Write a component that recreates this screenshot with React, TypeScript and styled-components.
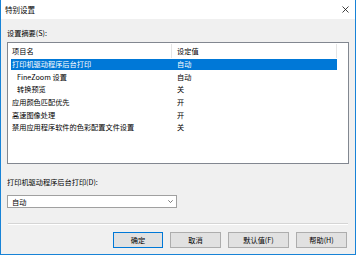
import React from "react";
import styled, { createGlobalStyle } from "styled-components";

const Global = createGlobalStyle`
  html, body { margin: 0; padding: 0; background: #ffffff; }
  * { box-sizing: border-box; }
  body { font-family: "Noto Sans CJK SC", "Noto Sans", sans-serif; color: #000; }
`;

const Window = styled.div`
  width: 356px;
  height: 255px;
  display: flex;
  flex-direction: column;
  border: 1px solid #1883d7;
  border-top: none;
  background: #f0f0f0;
  font-size: 7.2px;
  line-height: 10px;
`;

const TitleBar = styled.div`
  height: 19px;
  flex: none;
  background: #ffffff;
  display: flex;
  align-items: center;
  justify-content: space-between;
  padding: 0 6px 0 4px;
  font-size: 7.5px;
`;

const CloseIcon = styled.svg`
  width: 7px;
  height: 7px;
  margin-top: -1px;
`;

const Body = styled.div`
  flex: 1;
  display: flex;
  flex-direction: column;
  padding: 9px 6px 0 6px;
`;

const Label = styled.div`
  height: 10px;
  margin-bottom: ${(p: { $mb: number }) => p.$mb}px;
`;

const ListBox = styled.div`
  height: 122px;
  background: #ffffff;
  border: 1px solid #828790;
  display: flex;
  flex-direction: column;
`;

const Header = styled.div`
  height: 15px;
  display: flex;
  align-items: stretch;
  padding-top: 1px;
`;

const HeaderCell = styled.div<{ $w: number; $pl: number }>`
  width: ${(p) => p.$w}px;
  padding-left: ${(p) => p.$pl}px;
  display: flex;
  align-items: center;
  border-right: 1px solid #e5e5e5;
`;

const Row = styled.div<{ $sel?: boolean }>`
  height: 12.6px;
  margin-left: 3px;
  width: 326px;
  display: flex;
  padding: 1.1px 0;
  background: ${(p) => (p.$sel ? "#0078d7" : "transparent")};
  background-clip: content-box;
  color: ${(p) => (p.$sel ? "#ffffff" : "#000000")};
`;

const Cell = styled.div<{ $w: number; $pl: number }>`
  width: ${(p) => p.$w}px;
  padding-left: ${(p) => p.$pl}px;
  display: flex;
  align-items: center;
  white-space: nowrap;
`;

const Combo = styled.div`
  width: 170px;
  height: 13px;
  background: #ffffff;
  border: 1px solid #a0a0a0;
  display: flex;
  align-items: center;
  justify-content: space-between;
  padding: 0 3px 0 4px;
`;

const Chevron = styled.svg`
  width: 5px;
  height: 3px;
`;

const Separator = styled.div`
  margin: 15px 1px 0 1px;
  height: 2px;
  border-top: 1px solid #d5d5d5;
  border-bottom: 1px solid #ffffff;
`;

const ButtonRow = styled.div`
  display: flex;
  justify-content: flex-end;
  gap: 7px;
  margin-top: 7px;
  padding-right: 2px;
`;

const Button = styled.div<{ $w: number; $def?: boolean }>`
  width: ${(p) => p.$w}px;
  height: 16px;
  background: #e1e1e1;
  border: 1px solid ${(p) => (p.$def ? "#0078d7" : "#adadad")};
  display: flex;
  align-items: center;
  justify-content: center;
`;

const rows = [
  { name: "打印机驱动程序后台打印", value: "自动", indent: false, sel: true },
  { name: "FineZoom 设置", value: "自动", indent: true },
  { name: "转换预览", value: "关", indent: true },
  { name: "应用颜色匹配优先", value: "开", indent: false },
  { name: "高速图像处理", value: "开", indent: false },
  { name: "禁用应用程序软件的色彩配置文件设置", value: "关", indent: false },
];

export default function App() {
  return (
    <>
      <Global />
      <Window>
        <TitleBar>
          <span>特别设置</span>
          <CloseIcon viewBox="0 0 7 7">
            <path d="M0.5 0.5 L6.5 6.5 M6.5 0.5 L0.5 6.5" stroke="#111" strokeWidth="0.8" fill="none" />
          </CloseIcon>
        </TitleBar>
        <Body>
          <Label $mb={4}>设置摘要(S):</Label>
          <ListBox>
            <Header>
              <HeaderCell $w={164} $pl={4}>项目名</HeaderCell>
              <HeaderCell $w={165} $pl={5}>设定值</HeaderCell>
            </Header>
            {rows.map((r) => (
              <Row key={r.name} $sel={r.sel}>
                <Cell $w={161} $pl={r.indent ? 6 : 1}>{r.name}</Cell>
                <Cell $w={165} $pl={5}>{r.value}</Cell>
              </Row>
            ))}
          </ListBox>
          <Label $mb={8} style={{ marginTop: 13 }}>打印机驱动程序后台打印(D):</Label>
          <Combo>
            <span>自动</span>
            <Chevron viewBox="0 0 5 3">
              <path d="M0.3 0.3 L2.5 2.5 L4.7 0.3" stroke="#444" strokeWidth="0.7" fill="none" />
            </Chevron>
          </Combo>
          <Separator />
          <ButtonRow>
            <Button $w={50} $def>确定</Button>
            <Button $w={51}>取消</Button>
            <Button $w={61}>默认值(F)</Button>
            <Button $w={51}>帮助(H)</Button>
          </ButtonRow>
        </Body>
      </Window>
    </>
  );
}
